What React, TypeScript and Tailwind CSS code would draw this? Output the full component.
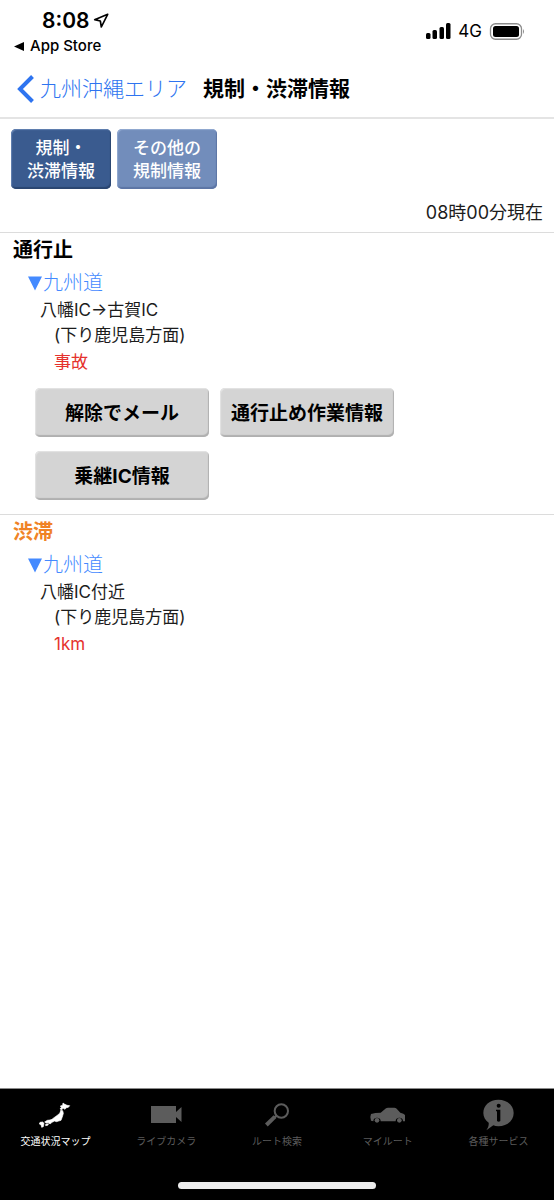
import type { ReactNode } from "react";

const FONT = "font-['Inter','Noto_Sans_CJK_JP',sans-serif]";

function StatusBar() {
  return (
    <div className="flex h-[59px] items-start justify-between pl-[14px] pr-[29px]">
      <div className="pt-2">
        <div className="flex items-center gap-1 pl-7">
          <span className="text-[21px] leading-[26px] font-semibold">8:08</span>
          <svg className="size-4" viewBox="0 0 48 48" fill="none" stroke="#000" strokeWidth="5" strokeLinejoin="round" aria-hidden="true">
            <path d="M44 4 L5 20 L22 24 L25 42 Z" />
          </svg>
        </div>
        <a href="#app-store" className="flex items-center gap-[6px] text-[15px] leading-6 font-medium">
          <svg className="h-[9px] w-[10px]" viewBox="0 0 10 9" aria-hidden="true">
            <path d="M0 4.5 L10 0 V9 Z" />
          </svg>
          App Store
        </a>
      </div>
      <div className="flex items-center gap-[7px] pt-5">
        <svg className="h-4 w-[26px]" viewBox="0 0 26 16" aria-hidden="true">
          <rect x="1" y="10" width="4.500" height="6" rx="1.5" />
          <rect x="7.500" y="7" width="4.500" height="9" rx="1.5" />
          <rect x="14.500" y="4" width="4.500" height="12" rx="1.5" />
          <rect x="21" y="0" width="4.500" height="16" rx="1.500" />
        </svg>
        <span className="text-[17px] leading-[22px]">4G</span>
        <svg className="h-[17px] w-9" viewBox="0 0 36 17" aria-hidden="true">
          <rect x="1.500" y=".75" width="31" height="15.500" rx="5" fill="none" stroke="#8c8c8c" strokeWidth="1.300" />
          <rect x="4" y="3" width="26" height="11" rx="2.500" />
          <path d="M34 6 Q36 8.500 34 11 Z" fill="#8c8c8c" />
        </svg>
      </div>
    </div>
  );
}

function RoadName({ children }: { children: ReactNode }) {
  return (
    <a href="#kyushu" className="flex items-center pt-[2px] pl-[28px] text-[20px] leading-[30px] font-light text-[#448aff]">
      <svg className="h-[15px] w-[15px]" viewBox="0 0 15 15" fill="currentColor" aria-hidden="true">
        <path d="M0 0.500 H14 L7 14.500 Z" />
      </svg>
      {children}
    </a>
  );
}

function Incident({ place, direction, status }: { place: string; direction: string; status: string }) {
  return (
    <div className="pl-10 text-[17px] leading-[25px] text-[#1c1c1c]">
      <p>{place}</p>
      <p className="pl-[14px]">{direction}</p>
      <p className="pl-[14px] pt-[2px] text-[#e5322d]">{status}</p>
    </div>
  );
}

function ActionButton({ children }: { children: ReactNode }) {
  return (
    <button
      type="button"
      className="h-[49px] w-[174px] rounded-[5px] bg-[#d4d4d4] pt-[3px] text-[19px] font-bold shadow-[inset_1px_1px_1px_#e4e4e4,inset_-1px_-2px_1px_#b0b0b0]"
    >
      {children}
    </button>
  );
}

function JapanIcon() {
  return (
    <svg className="h-[26px] w-8" viewBox="118 64 96 78" fill="currentColor" stroke="currentColor" strokeWidth="2" strokeLinejoin="round" aria-hidden="true">
      <path d="M190 67 L194 70 L202 74 L210 75 L206 80 L200 81 L196 86 L190 82 L187 87 L181 85 L185 80 L182 76 L189 74 Z" />
      <path d="M183 89 L189 90 L191 98 L189 105 L187 111 L184 119 L177 121 L170 123 L165 121 L157 125 L151 130 L147 126 L139 127 L135 124 L143 119 L151 118 L157 116 L163 111 L169 107 L174 103 L179 99 L182 94 Z" />
      <path d="M138 131 L147 129 L144 134 L138 135 Z M121 125 L129 124 L133 128 L131 138 L126 140 L124 132 L119 130 Z" />
    </svg>
  );
}

function CameraIcon() {
  return (
    <svg className="h-[17px] w-[31px]" viewBox="0 0 31 17" fill="currentColor" aria-hidden="true">
      <path d="M0 0 H25 V6 L30.500 1 V16 L25 11 V17 H0 Z" />
    </svg>
  );
}

function SearchIcon() {
  return (
    <svg className="h-6 w-6" viewBox="0 0 72 72" fill="none" stroke="currentColor" aria-hidden="true">
      <circle cx="49" cy="24" r="20" strokeWidth="6" />
      <path d="M35 38 L28 44" strokeWidth="7" />
      <path d="M30 41 L4 66" strokeWidth="12" />
    </svg>
  );
}

function CarIcon() {
  return (
    <svg className="h-4 w-9" viewBox="30 78 108 48" aria-hidden="true">
      <path fill="currentColor" d="M33 99 Q45 95 62 95 L78 82 Q80 80 84 80 H103 Q107 80 110 83 L121 95 Q132 97 135 102 V121 H129 A11 11 0 0 0 107 121 H62 A11 11 0 0 0 40 121 L33 119 L31 108 Z" />
      <circle cx="51" cy="118" r="7" fill="currentColor" />
      <circle cx="118" cy="118" r="7" fill="currentColor" />
    </svg>
  );
}

function InfoIcon() {
  return (
    <svg className="h-8 w-[31px]" viewBox="0 0 93 96" aria-hidden="true">
      <path fill="currentColor" d="M46 2 C72 2 92 19 92 42 C92 65 72 82 46 82 C40 82 35 81 31 79 L10 94 C16 86 18 78 17 71 C7 64 1 54 1 42 C1 19 20 2 46 2 Z" />
      <circle cx="47" cy="20" r="6" fill="#000" />
      <path fill="#000" d="M39 32 H52 V66 Q47 71 42 66 V37 H39 Z" />
    </svg>
  );
}

const tabs = [
  { label: "交通状況マップ", icon: <JapanIcon />, active: true },
  { label: "ライブカメラ", icon: <CameraIcon />, active: false },
  { label: "ルート検索", icon: <SearchIcon />, active: false },
  { label: "マイルート", icon: <CarIcon />, active: false },
  { label: "各種サービス", icon: <InfoIcon />, active: false },
];

export default function App() {
  return (
    <div className={`flex min-h-screen flex-col bg-white text-black ${FONT}`}>
      <StatusBar />
      <header className="flex h-[60px] items-center gap-4 border-b-2 border-[#e4e4e4] pt-[2px] pl-[17px] text-[21px]">
        <a href="#area" className="flex items-center gap-[6px] font-light text-[#2e74f0]">
          <svg className="h-[29px] w-[17px]" viewBox="0 0 17 29" fill="none" stroke="currentColor" strokeWidth="4" aria-hidden="true">
            <path d="M15.500 1.500 L3 14 L15.500 26.500" />
          </svg>
          九州沖縄エリア
        </a>
        <h1 className="font-bold">規制・渋滞情報</h1>
      </header>

      <main className="flex-1">
        <nav className="flex gap-[6px] px-[11px] pt-[10px]">
          <button
            type="button"
            className="h-[60px] w-[100px] rounded-[5px] bg-[#3a5b8f] pt-[2px] text-[17px] leading-[23px] font-medium text-white shadow-[inset_1px_1px_1px_#6482b2,inset_-1px_-2px_1px_#2a4570]"
          >
            規制・
            <br />
            渋滞情報
          </button>
          <button
            type="button"
            className="h-[60px] w-[100px] rounded-[5px] bg-[#728dbb] pt-[2px] text-[17px] leading-[23px] font-medium text-white shadow-[inset_1px_1px_1px_#94abd2,inset_-1px_-2px_1px_#5c75a5]"
          >
            その他の
            <br />
            規制情報
          </button>
        </nav>
        <p className="pt-[11px] pr-[11px] pb-[7px] text-right text-[18px] leading-[25px] text-[#1c1c1c]">08時00分現在</p>

        <section className="border-t border-[#dcdcdc] pb-[14px]">
          <h2 className="pt-px pl-[13px] text-[20px] leading-[32px] font-bold">通行止</h2>
          <RoadName>九州道</RoadName>
          <Incident place="八幡IC→古賀IC" direction="(下り鹿児島方面)" status="事故" />
          <div className="flex flex-wrap gap-x-[11px] gap-y-[14px] pt-[13px] pr-[100px] pl-[35px]">
            <ActionButton>解除でメール</ActionButton>
            <ActionButton>通行止め作業情報</ActionButton>
            <ActionButton>乗継IC情報</ActionButton>
          </div>
        </section>

        <section className="border-t border-[#dcdcdc] pb-[14px]">
          <h2 className="pt-px pl-[13px] text-[20px] leading-[32px] font-bold text-[#f08326]">渋滞</h2>
          <RoadName>九州道</RoadName>
          <Incident place="八幡IC付近" direction="(下り鹿児島方面)" status="1km" />
        </section>
      </main>

      <footer className="border-t border-[#8a8a8a] bg-black pb-[11px]">
        <nav className="grid h-[93px] grid-cols-5">
          {tabs.map((tab) => (
            <a
              key={tab.label}
              href="#tab"
              className={`flex flex-col items-center gap-px pt-2 text-[10px] leading-[16px] whitespace-nowrap ${tab.active ? "text-white" : "text-[#5c5c5c]"}`}
            >
              <span className="flex h-[35px] items-center">{tab.icon}</span>
              {tab.label}
            </a>
          ))}
        </nav>
        <div className="mx-auto h-[7px] w-[198px] rounded-full bg-[#ececec]" />
      </footer>
    </div>
  );
}
